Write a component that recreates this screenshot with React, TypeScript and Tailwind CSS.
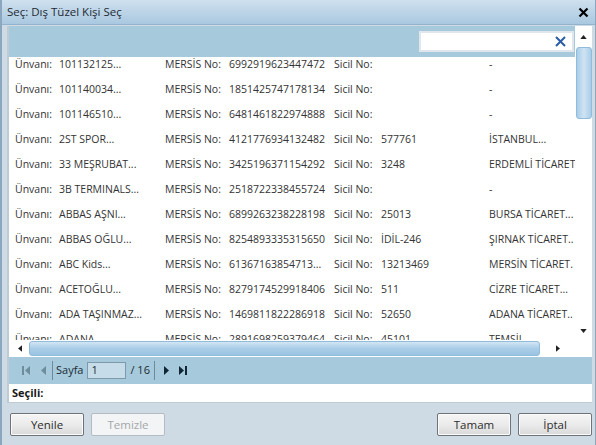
import React from 'react';

type Row = {
  unvan: string;
  mersis: string;
  sicil: string;
  oda: string;
};

const rows: Row[] = [
  { unvan: '101132125...', mersis: '6992919623447472', sicil: '', oda: '-' },
  { unvan: '101140034...', mersis: '1851425747178134', sicil: '', oda: '-' },
  { unvan: '101146510...', mersis: '6481461822974888', sicil: '', oda: '-' },
  { unvan: '2ST SPOR...', mersis: '4121776934132482', sicil: '577761', oda: 'İSTANBUL...' },
  { unvan: '33 MEŞRUBAT...', mersis: '3425196371154292', sicil: '3248', oda: 'ERDEMLİ TİCARET' },
  { unvan: '3B TERMINALS...', mersis: '2518722338455724', sicil: '', oda: '-' },
  { unvan: 'ABBAS AŞNI...', mersis: '6899263238228198', sicil: '25013', oda: 'BURSA TİCARET...' },
  { unvan: 'ABBAS OĞLU...', mersis: '8254893335315650', sicil: 'İDİL-246', oda: 'ŞIRNAK TİCARET..' },
  { unvan: 'ABC Kids...', mersis: '61367163854713...', sicil: '13213469', oda: 'MERSİN TİCARET.' },
  { unvan: 'ACETOĞLU...', mersis: '8279174529918406', sicil: '511', oda: 'CİZRE TİCARET...' },
  { unvan: 'ADA TAŞINMAZ...', mersis: '1469811822286918', sicil: '52650', oda: 'ADANA TİCARET..' },
  { unvan: 'ADANA...', mersis: '2891698259379464', sicil: '45101', oda: 'TEMSİL...' },
];

const font = { fontFamily: '"Open Sans", "Noto Sans", sans-serif' };

function Tri({ dir, className }: { dir: 'up' | 'down' | 'left' | 'right'; className?: string }) {
  const pts = {
    up: '0,5 4,0 8,5',
    down: '0,0 8,0 4,5',
    left: '5,0 5,8 0,4',
    right: '0,0 0,8 5,4',
  }[dir];
  const vb = dir === 'up' || dir === 'down' ? '0 0 8 5' : '0 0 5 8';
  const size = dir === 'up' || dir === 'down' ? 'w-[7px] h-[4px]' : 'w-[4px] h-[7px]';
  return (
    <svg viewBox={vb} className={`${size} ${className ?? ''}`}>
      <polygon points={pts} fill="currentColor" />
    </svg>
  );
}

function PagerIcon({ kind, disabled }: { kind: 'first' | 'prev' | 'next' | 'last'; disabled?: boolean }) {
  const color = disabled ? '#6f8c9c' : '#102634';
  return (
    <svg width="10" height="11" viewBox="0 0 10 11" fill={color}>
      {kind === 'first' && (
        <>
          <rect x="1" y="1" width="2" height="9" />
          <polygon points="9,1 9,10 4,5.5" />
        </>
      )}
      {kind === 'prev' && <polygon points="7,1 7,10 2,5.5" />}
      {kind === 'next' && <polygon points="3,1 3,10 8,5.5" />}
      {kind === 'last' && (
        <>
          <polygon points="1,1 1,10 6,5.5" />
          <rect x="7" y="1" width="2" height="9" />
        </>
      )}
    </svg>
  );
}

function Button({ label, disabled }: { label: string; disabled?: boolean }) {
  return (
    <button
      className={
        disabled
          ? 'w-[74px] h-[23px] rounded-[2px] border border-[#b5bcc1] bg-[#f3f4f5] text-[11.5px] text-[#a3a7aa]'
          : 'w-[74px] h-[23px] rounded-[2px] border border-[#6f7377] bg-gradient-to-b from-[#f5f5f5] via-[#ebebeb] to-[#d9d9d9] text-[11.5px] text-[#2d2d2d] shadow-[inset_0_0_0_1px_#fbfbfb]'
      }
      style={font}
    >
      {label}
    </button>
  );
}

export default function App() {
  return (
    <div
      className="w-[596px] h-[445px] bg-[#cfdbe4] border-l-2 border-r border-[#8aa7bf] flex flex-col overflow-hidden"
      style={font}
    >
      <div className="h-[25px] shrink-0 flex items-center justify-between pl-[5px] pr-[6px] bg-gradient-to-b from-[#cfe0ee] to-[#a9c8e0] border-b border-[#93b3cc]">
        <span className="text-[11.5px] text-[#1e2a34]">Seç: Dış Tüzel Kişi Seç</span>
        <svg width="11" height="11" viewBox="0 0 11 11">
          <path d="M1.5 1.5 L9.5 9.5 M9.5 1.5 L1.5 9.5" stroke="#000" strokeWidth="2.2" />
        </svg>
      </div>

      <div className="pl-[5px] pr-[3px] pt-[1px]">
        <div className="border-l-2 border-b border-[#bfcbd3] bg-white flex flex-col">
          <div className="flex">
            <div className="w-[566px] flex flex-col">
              <div className="h-[31px] bg-[#a6cadb] flex items-center justify-end pr-[1px]">
                <div className="w-[155px] h-[21px] bg-white border-2 border-[#dfe7ec] flex items-center justify-end pr-[6px]">
                  <svg width="11" height="11" viewBox="0 0 11 11">
                    <path d="M1 1 L10 10 M10 1 L1 10" stroke="#2a5da6" strokeWidth="2" />
                  </svg>
                </div>
              </div>
              <div className="h-[283px] overflow-hidden">
                <div className="-mt-[5px] text-[10.5px] text-[#333]">
                  {rows.map((r, i) => (
                    <div key={i} className="h-[25px] flex items-center pl-[6px] whitespace-nowrap">
                      <span className="w-[44px] shrink-0">Ünvanı:</span>
                      <span className="w-[106px] shrink-0">{r.unvan}</span>
                      <span className="w-[64px] shrink-0">MERSİS No:</span>
                      <span className="w-[105px] shrink-0">{r.mersis}</span>
                      <span className="w-[47px] shrink-0">Sicil No:</span>
                      <span className="w-[108px] shrink-0">{r.sicil}</span>
                      <span className="flex-1 overflow-hidden">{r.oda}</span>
                    </div>
                  ))}
                </div>
              </div>
              <div className="h-[17px] flex items-center">
                <div className="w-[20px] flex justify-center pl-[2px] text-[#222]">
                  <Tri dir="left" />
                </div>
                <div className="w-[511px] h-[15px] rounded-[3px] border border-[#8fbbdc] bg-gradient-to-b from-[#d3e6f4] via-[#a9cde8] to-[#9ac4e3]" />
                <div className="flex-1 flex justify-center text-[#222]">
                  <Tri dir="right" />
                </div>
              </div>
            </div>
            <div className="w-[17px] flex flex-col">
              <div className="h-[314px] flex flex-col items-center">
                <div className="h-[21px] flex items-center justify-center text-[#222]">
                  <Tri dir="up" />
                </div>
                <div className="w-[16px] h-[72px] rounded-[3px] border border-[#8fbbdc] bg-gradient-to-r from-[#a9cde8] via-[#cfe4f3] to-[#a9cde8]" />
                <div className="flex-1" />
                <div className="h-[18px] flex items-center justify-center text-[#222]">
                  <Tri dir="down" />
                </div>
              </div>
              <div className="h-[17px]" />
            </div>
          </div>

          <div className="h-[27px] bg-[#a6cadb] flex items-center pl-[7px] text-[11px] text-[#1b2b36]">
            <div className="w-[20px] flex justify-center"><PagerIcon kind="first" disabled /></div>
            <div className="w-[16px] flex justify-center"><PagerIcon kind="prev" disabled /></div>
            <div className="w-px h-[19px] bg-[#6c8c9e] mr-[3px]" />
            <span>Sayfa</span>
            <div className="ml-[4px] w-[39px] h-[17px] bg-[#c6dde9] border border-[#7d99aa] flex items-center pl-[3px] text-[11px]">1</div>
            <span className="ml-[4px]">/ 16</span>
            <div className="w-px h-[19px] bg-[#6c8c9e] ml-[4px] mr-[4px]" />
            <div className="w-[14px] flex justify-center"><PagerIcon kind="next" /></div>
            <div className="w-[20px] flex justify-center"><PagerIcon kind="last" /></div>
          </div>

          <div className="h-[18px] flex items-center pl-[3px] text-[11px] font-bold text-[#1a1a1a]">Seçili:</div>
        </div>
      </div>

      <div className="flex justify-between pl-[8px] pr-[3px] mt-[10px]">
        <div className="flex gap-[7px]">
          <Button label="Yenile" />
          <Button label="Temizle" disabled />
        </div>
        <div className="flex gap-[7px]">
          <Button label="Tamam" />
          <Button label="İptal" />
        </div>
      </div>
    </div>
  );
}
